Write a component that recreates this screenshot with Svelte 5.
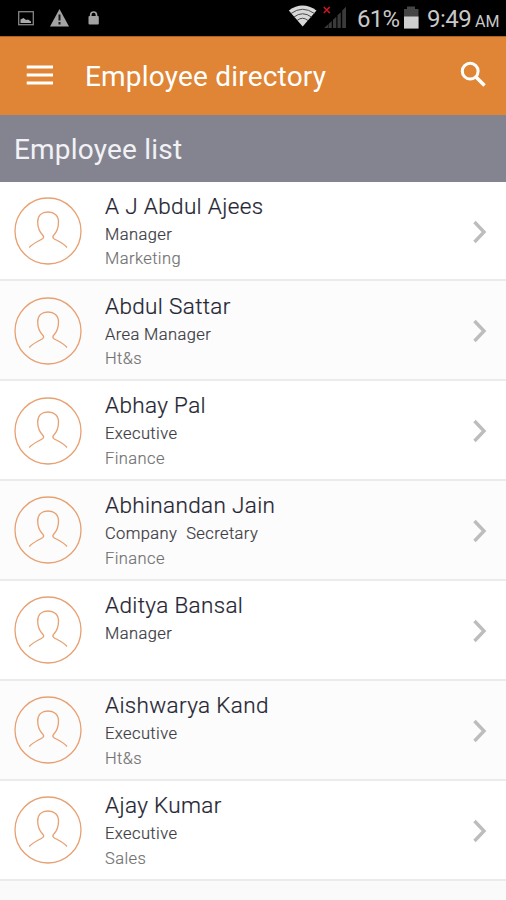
<script>
  const employees = [
    { name: 'A J Abdul Ajees', role: 'Manager', department: 'Marketing' },
    { name: 'Abdul Sattar', role: 'Area Manager', department: 'Ht&s' },
    { name: 'Abhay Pal', role: 'Executive', department: 'Finance' },
    { name: 'Abhinandan Jain', role: 'Company  Secretary', department: 'Finance' },
    { name: 'Aditya Bansal', role: 'Manager', department: '' },
    { name: 'Aishwarya Kand', role: 'Executive', department: 'Ht&s' },
    { name: 'Ajay Kumar', role: 'Executive', department: 'Sales' }
  ];
</script>

<main class="screen">
  <div class="status">
    <svg class="notices" width="100" height="36" viewBox="0 0 100 36">
      <rect x="18.7" y="11.7" width="14.6" height="13" fill="none" stroke="#858585" stroke-width="1.3" />
      <path d="M20.500 23V19.500l3-1.500 2.500 2 2-.5 3 2V23z" fill="#aaa" />
      <path d="M59.5 9L69 26.500H50z" fill="#a3a3a3" />
      <path d="M59.5 14.500v6M59.5 22v2.500" stroke="#181818" stroke-width="2" />
      <rect x="88.500" y="16" width="10.300" height="8.500" rx="1" fill="#a3a3a3" />
      <path d="M90.700 17v-2a2.900 3 0 0 1 5.800 0v2" fill="none" stroke="#a3a3a3" stroke-width="1.7" />
    </svg>
    <svg class="signals" width="60" height="36" viewBox="288 0 60 36">
      <path d="M288.800 10.500Q302.500 0.500 316.500 10.500L302.700 26.500z" fill="#d8d8d8" />
      <path d="M291 13.500Q302.500 5 314.500 13.500M294 17Q302.500 10.500 311.500 17M297 20.500Q302.500 16 308 20.500" fill="none" stroke="#4a4a4a" stroke-width="1" />
      <path d="M323.800 7l6 6M329.800 7l-6 6" stroke="#cc1720" stroke-width="1.6" />
      <path d="M324 28l4-3.500V28zM328.500 24l3.300-3V28h-3.300zM333 19.700l3.300-3V28H333zM337.500 15.200l3.300-3V28h-3.300zM342.200 10.500l3.800-3.800V28h-3.800z" fill="#3a3a3a" />
    </svg>
    <span class="percent">61%</span>
    <svg class="battery" width="16" height="36" viewBox="403 0 16 36">
      <path d="M404 9h3V6.500h8V9h3.500v19.500H404z" fill="#454545" />
      <path d="M404 16.500h14.500v12H404z" fill="#d0d0d0" />
    </svg>
    <span class="clock">9:49</span><span class="period">AM</span>
  </div>

  <header class="toolbar">
    <svg class="menu" width="28" height="24" viewBox="0 0 28 24">
      <path d="M.7 4h26.300M.7 12h26.300M.7 20h26.300" stroke="#fff" stroke-width="3" />
    </svg>
    <h1>Employee directory</h1>
    <svg class="search" width="28" height="28" viewBox="0 0 28 28">
      <circle cx="10.200" cy="10.200" r="7.900" fill="none" stroke="#fff" stroke-width="3" />
      <path d="M15.500 15.500L24.500 24.500" stroke="#fff" stroke-width="3.600" />
    </svg>
  </header>

  <h2>Employee list</h2>

  <ul>
    {#each employees as employee}
      <li>
        <svg class="avatar" width="68" height="68" viewBox="0 0 68 68" fill="none" stroke="#e7a071" stroke-width="1.300">
          <circle cx="34" cy="34" r="33" />
          <path d="M15.300 50.500C18 47 24 44.500 28.500 41.700Q30.500 40.300 29 38.500C25.500 35 23.700 31 23.700 25C23.700 18.500 28 15 34 15S44.500 18.500 44.500 25C44.500 31 43 35 39.500 38.500Q38 40.300 40 41.700C44 44 50 46.500 53 50.500" />
        </svg>
        <div class="details">
          <span class="name">{employee.name}</span>
          <span class="role">{employee.role}</span>
          <span class="department">{employee.department}</span>
        </div>
        <svg class="chevron" width="16" height="26" viewBox="0 0 16 26">
          <path d="M2.500 3L12 13L2.500 23" fill="none" stroke="#bdbdbd" stroke-width="3.400" />
        </svg>
      </li>
    {/each}
  </ul>
</main>

<style>
  :global(body) { margin: 0; }
  .screen {
    width: 506px;
    height: 900px;
    overflow: hidden;
    display: flex;
    flex-direction: column;
    background: #fafafa;
    font-family: Roboto, "Noto Sans", sans-serif;
  }
  .status {
    height: 36px;
    flex: none;
    display: flex;
    background: #000;
    color: #c8c8c8;
    line-height: 38px;
    white-space: nowrap;
  }
  .notices { margin-right: 188px; flex: none; }
  .signals { flex: none; }
  .percent { width: 47px; margin-left: 9px; font-size: 24px; letter-spacing: -0.700px; flex: none; }
  .battery { margin-left: -1px; flex: none; }
  .clock { margin-left: 8px; width: 48px; font-size: 24px; letter-spacing: -0.500px; flex: none; }
  .period { font-size: 16px; line-height: 43px; }
  .toolbar {
    box-sizing: border-box;
    height: 79px;
    flex: none;
    display: flex;
    align-items: center;
    padding: 0 20px 3px 26px;
    background: #df8535;
    border-top: 1px solid #a8652b;
    color: #fff;
  }
  .menu { flex: none; }
  h1, h2 { margin: 0; font-size: 28px; font-weight: 400; letter-spacing: 0.200px; white-space: nowrap; }
  h1 { margin-left: 31px; padding-top: 4px; flex: 1; }
  .search { margin-right: -2px; }
  h2 {
    box-sizing: border-box;
    height: 66.500px;
    flex: none;
    padding: 2px 14px 0;
    line-height: 66px;
    color: #f2f2f5;
    background: #848491;
  }
  ul { list-style: none; margin: 0; padding: 0; }
  li {
    box-sizing: border-box;
    height: 99.900px;
    display: flex;
    align-items: flex-start;
    background: #fff;
    border-bottom: 2px solid #ebebeb;
  }
  li:nth-child(even) { background: #fcfcfc; }
  .avatar { margin: 15.300px 0 0 14px; flex: none; }
  .details { display: flex; flex-direction: column; flex: 1; margin: 10.200px 0 0 23px; white-space: pre; }
  .name { font-size: 22.500px; line-height: 29px; font-weight: 300; letter-spacing: 0.350px; color: #252533; -webkit-text-stroke: 0.200px #252533; }
  .role, .department { font-size: 16.500px; line-height: 24.700px; font-weight: 300; letter-spacing: 0.400px; }
  .role { margin-top: 2px; color: #3c3c44; -webkit-text-stroke: 0.200px #3c3c44; }
  .department { color: #707070; -webkit-text-stroke: 0.150px #707070; }
  .chevron { margin: 37px 18px 0 0; flex: none; }
</style>
